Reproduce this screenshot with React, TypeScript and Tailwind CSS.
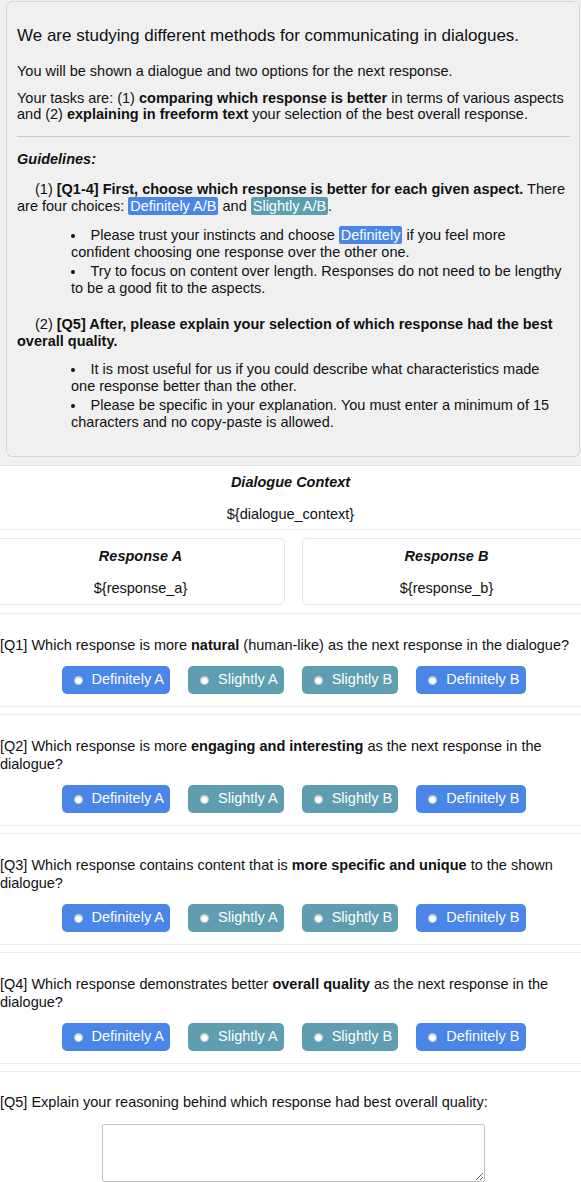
import React from 'react';

const font = "font-['Liberation_Sans',Arial,Helvetica,sans-serif]";

const Tag: React.FC<{ tone: 'blue' | 'teal'; children: React.ReactNode }> = ({ tone, children }) => (
  <span className={`${tone === 'blue' ? 'bg-[#4a86e8]' : 'bg-[#5b9fb1]'} text-white rounded-[2px] px-[2px] py-[1px]`}>
    {children}
  </span>
);

const Choice: React.FC<{ label: string; tone: 'blue' | 'teal' }> = ({ label, tone }) => (
  <label
    className={`flex items-center gap-[9px] h-[28px] pl-[12px] pr-[6px] rounded-[5px] text-white text-[14.5px] cursor-pointer ${
      tone === 'blue' ? 'bg-[#4a86e8]' : 'bg-[#5f9eb0]'
    }`}
  >
    <span className="w-[9px] h-[9px] rounded-full bg-white border border-[#c8c8c8] shadow-[inset_0_1px_1px_rgba(0,0,0,0.2)]" />
    {label}
  </label>
);

const Question: React.FC<{ children: React.ReactNode }> = ({ children }) => (
  <section className="border-y border-[#ececec] mb-[7px] pt-[22px] pb-[12px]">
    <p className="text-[14.5px] leading-[18px] text-[#111]">{children}</p>
    <div className="flex justify-center gap-[18px] mt-[12px] pl-[6px]">
      <Choice label="Definitely A" tone="blue" />
      <Choice label="Slightly A" tone="teal" />
      <Choice label="Slightly B" tone="teal" />
      <Choice label="Definitely B" tone="blue" />
    </div>
  </section>
);

export default function App() {
  return (
    <div className={`${font} w-[581px] min-h-[1182px] bg-white text-[#111] overflow-hidden`}>
      {/* Instructions */}
      <div className="bg-[#f0f0f0] pl-[6px] pr-[1px] pt-[1px] pb-[8px] border-b border-[#e4e4e4]">
        <div className="border border-dotted border-[#a9c9a0] rounded-[6px] pl-[10px] pr-[9px] pt-[24px] pb-[25px]">
          <h1 className="text-[17px] leading-[20px] mb-[17px]">
            We are studying different methods for communicating in dialogues.
          </h1>
          <p className="text-[14.5px] leading-[16px] mb-[11px]">
            You will be shown a dialogue and two options for the next response.
          </p>
          <p className="text-[14.5px] leading-[16px]">
            Your tasks are: (1) <b>comparing which response is better</b> in terms of various aspects and (2){' '}
            <b>explaining in freeform text</b> your selection of the best overall response.
          </p>
          <hr className="border-t border-[#c9c9c9] my-[14px]" />
          <p className="text-[14.5px] leading-[16px] font-bold italic mb-[14px]">Guidelines:</p>
          <p className="text-[14.5px] leading-[17px] indent-[18px]">
            (1) <b>[Q1-4] First, choose which response is better for each given aspect.</b> There are four choices:{' '}
            <Tag tone="blue">Definitely A/B</Tag> and <Tag tone="teal">Slightly A/B</Tag>.
          </p>
          <ul className="list-disc list-inside pl-[54px] pr-[8px] text-[14.5px] leading-[17px] mt-[12px] space-y-[2px]">
            <li>
              Please trust your instincts and choose <Tag tone="blue">Definitely</Tag> if you feel more confident
              choosing one response over the other one.
            </li>
            <li>Try to focus on content over length. Responses do not need to be lengthy to be a good fit to the aspects.</li>
          </ul>
          <p className="text-[14.5px] leading-[17px] indent-[18px] mt-[19px]">
            (2) <b>[Q5] After, please explain your selection of which response had the best overall quality.</b>
          </p>
          <ul className="list-disc list-inside pl-[54px] pr-[8px] text-[14.5px] leading-[17px] mt-[11px] space-y-[2px]">
            <li>It is most useful for us if you could describe what characteristics made one response better than the other.</li>
            <li>
              Please be specific in your explanation. You must enter a minimum of 15 characters and no copy-paste is
              allowed.
            </li>
          </ul>
        </div>
      </div>

      {/* Dialogue context */}
      <section className="border-b border-[#ececec] text-center text-[14.5px] pt-[8px] pb-[7px] mb-[8px]">
        <p className="font-bold italic leading-[16px]">Dialogue Context</p>
        <p className="leading-[16px] mt-[16px]">{'${dialogue_context}'}</p>
      </section>

      {/* Responses */}
      <div className="grid grid-cols-2 gap-[17px] -ml-[4px] -mr-[10px] mb-[8px]">
        {[
          ['Response A', '${response_a}'],
          ['Response B', '${response_b}'],
        ].map(([title, body]) => (
          <div key={title} className="border border-[#e6e6e6] rounded-[5px] text-center text-[14.5px] pt-[9px] pb-[8px]">
            <p className="font-bold italic leading-[16px]">{title}</p>
            <p className="leading-[16px] mt-[16px]">{body}</p>
          </div>
        ))}
      </div>

      <Question>
        [Q1] Which response is more <b>natural</b> (human-like) as the next response in the dialogue?
      </Question>
      <Question>
        [Q2] Which response is more <b>engaging and interesting</b> as the next response in the dialogue?
      </Question>
      <Question>
        [Q3] Which response contains content that is <b>more specific and unique</b> to the shown dialogue?
      </Question>
      <Question>
        [Q4] Which response demonstrates better <b>overall quality</b> as the next response in the dialogue?
      </Question>

      {/* Q5 */}
      <section className="border-t border-[#ececec] pt-[21px]">
        <p className="text-[14.5px] leading-[18px]">
          [Q5] Explain your reasoning behind which response had best overall quality:
        </p>
        <div className="flex justify-center mt-[13px] pl-[6px]">
          <textarea className="w-[383px] h-[58px] border border-[#c4c4c4] rounded-[2px] bg-white" />
        </div>
      </section>
    </div>
  );
}
